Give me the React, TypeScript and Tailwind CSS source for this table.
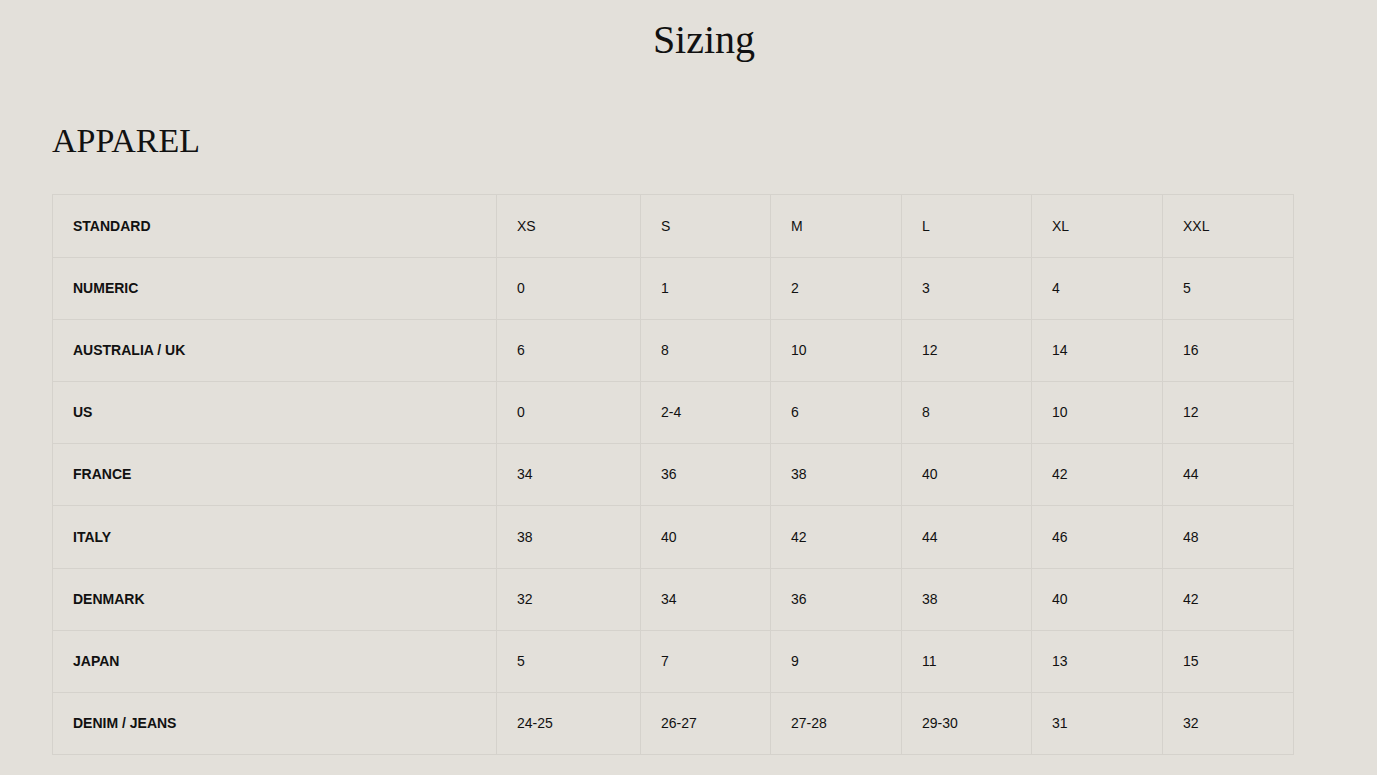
const rows: [string, string[]][] = [
  ['STANDARD', ['XS', 'S', 'M', 'L', 'XL', 'XXL']],
  ['NUMERIC', ['0', '1', '2', '3', '4', '5']],
  ['AUSTRALIA / UK', ['6', '8', '10', '12', '14', '16']],
  ['US', ['0', '2-4', '6', '8', '10', '12']],
  ['FRANCE', ['34', '36', '38', '40', '42', '44']],
  ['ITALY', ['38', '40', '42', '44', '46', '48']],
  ['DENMARK', ['32', '34', '36', '38', '40', '42']],
  ['JAPAN', ['5', '7', '9', '11', '13', '15']],
  ['DENIM / JEANS', ['24-25', '26-27', '27-28', '29-30', '31', '32']],
]

export default function App() {
  return (
    <div className="min-h-[775px] w-full bg-[#e3e0da] text-[#111] font-['Liberation_Sans',Arial,sans-serif]">
      {/* Page title */}
      <div className="flex justify-center pl-[31px] pt-[14px]">
        <h1 className="font-['Liberation_Serif','Times_New_Roman',serif] text-[40px] leading-[52px] text-[#111]">
          Sizing
        </h1>
      </div>

      <section className="px-[52px]">
        <h2 className="mt-[55px] font-['Liberation_Serif','Times_New_Roman',serif] text-[34px] leading-[40px] text-[#111]">
          APPAREL
        </h2>

        <table className="mt-[33px] w-[1242px] table-fixed border-collapse text-[14px]">
          <colgroup>
            <col className="w-[444px]" />
            <col className="w-[144px]" />
            <col className="w-[130px]" />
            <col className="w-[131px]" />
            <col className="w-[130px]" />
            <col className="w-[131px]" />
            <col className="w-[131px]" />
          </colgroup>
          <tbody>
            {rows.map(([label, values], r) => {
              const h = r === 0 || r === 5 ? 'h-[63px]' : 'h-[62px]'
              return (
                <tr key={label}>
                  <td className={`${h} border border-[#d5d2cc] pl-[20px] align-middle font-bold`}>
                    {label}
                  </td>
                  {values.map((v, i) => (
                    <td key={i} className={`${h} border border-[#d5d2cc] pl-[20px] align-middle`}>
                      {v}
                    </td>
                  ))}
                </tr>
              )
            })}
          </tbody>
        </table>
      </section>
    </div>
  )
}
